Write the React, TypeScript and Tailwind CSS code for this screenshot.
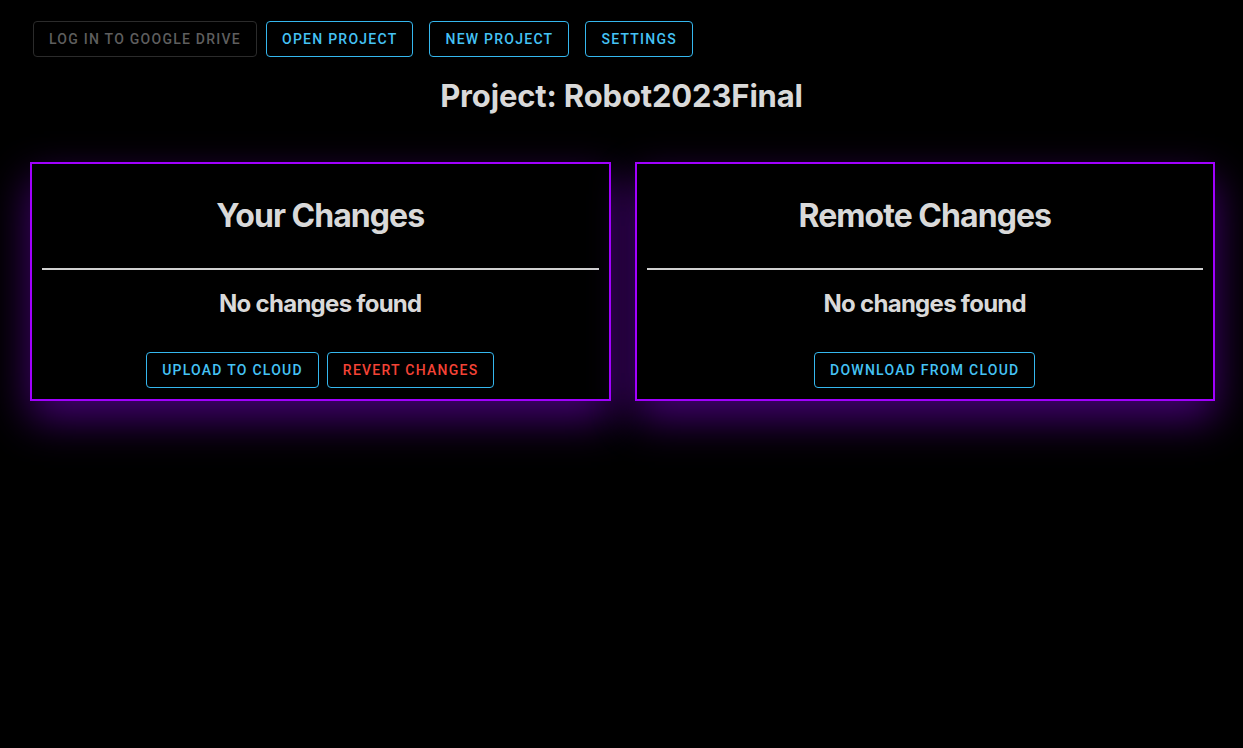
import React from "react";

type Tone = "disabled" | "primary" | "danger";

function OutlineButton({ label, tone = "primary", className = "" }: { label: string; tone?: Tone; className?: string }) {
  const toneClass =
    tone === "disabled"
      ? "border-[#2b2b2b] text-[#5e5e5e]"
      : tone === "danger"
      ? "border-[#35b7ee] text-[#f44336]"
      : "border-[#35b7ee] text-[#45c3f5]";
  return (
    <button
      className={`h-9 px-[15px] rounded-[4px] border uppercase text-[14px] font-medium tracking-[1.25px] leading-5 font-['Roboto',sans-serif] ${toneClass} ${className}`}
    >
      {label}
    </button>
  );
}

function ChangesCard({ title, children }: { title: string; children: React.ReactNode }) {
  return (
    <div className="flex-1 border-2 border-[#a100ff] bg-black shadow-[0_18px_40px_rgba(150,0,255,0.45)] flex flex-col items-center px-[10px] pb-[11px]">
      <h2 className="mt-[32px] text-[32px] leading-[40px] font-bold tracking-[-0.03em] text-[#d9d9d9]">{title}</h2>
      <div className="mt-[32px] w-full h-[2px] bg-[#d0d0d0]" />
      <p className="mt-[18px] text-[24px] leading-[32px] font-bold tracking-[-0.03em] text-[#d9d9d9]">No changes found</p>
      <div className="mt-[32px] flex gap-2">{children}</div>
    </div>
  );
}

export default function App() {
  return (
    <main className="min-h-screen w-full bg-black font-['Inter',sans-serif]">
      <div className="flex pt-[21px] pl-[33px]">
        <OutlineButton label="Log in to Google Drive" tone="disabled" />
        <OutlineButton label="Open Project" className="ml-[9px]" />
        <OutlineButton label="New Project" className="ml-4" />
        <OutlineButton label="Settings" className="ml-4" />
      </div>

      <h1 className="mt-[21px] text-center text-[31px] leading-[36px] font-bold tracking-[-0.005em] text-[#d9d9d9]">
        Project: Robot2023Final
      </h1>

      <div className="mt-[48px] flex gap-6 pl-[30px] pr-[28px]">
        <ChangesCard title="Your Changes">
          <OutlineButton label="Upload to Cloud" />
          <OutlineButton label="Revert Changes" tone="danger" />
        </ChangesCard>
        <ChangesCard title="Remote Changes">
          <OutlineButton label="Download from Cloud" />
        </ChangesCard>
      </div>
    </main>
  );
}
